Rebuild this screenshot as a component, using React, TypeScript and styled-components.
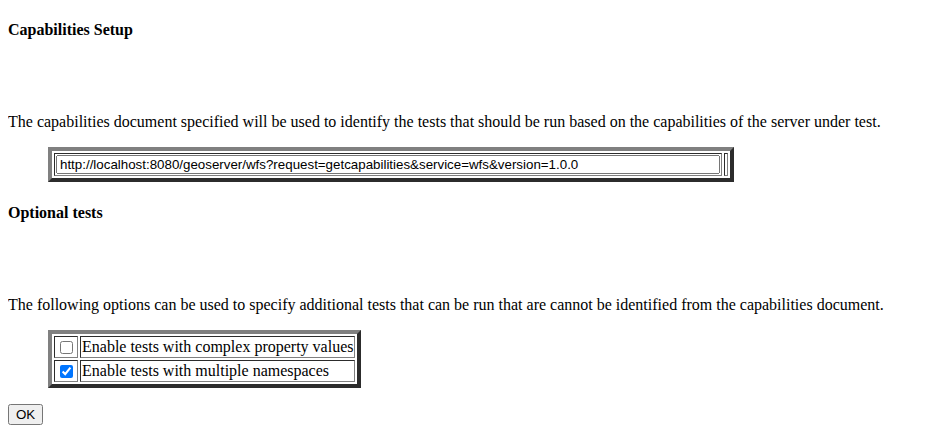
import styled, { createGlobalStyle } from "styled-components";

const Global = createGlobalStyle`
  body {
    margin: 0 8px 8px;
    font-family: "Liberation Serif", "Times New Roman", serif;
    font-size: 16px;
    color: #000;
    background: #fff;
  }
`;

const Heading = styled.h4`
  margin: 21.28px 0 0;
  font-size: 16px;
  font-weight: bold;
`;

const Lead = styled.p`
  margin: 74px 0 16px;
`;

const Indent = styled.blockquote`
  margin: 16px 40px;
`;

const Frame = styled.table`
  border: 4px outset gray;
  border-spacing: 2px;
  border-collapse: separate;
`;

const Cell = styled.td`
  border: 1px inset gray;
  padding: 1px;
  line-height: 18px;
`;

const UrlInput = styled.input`
  width: 664px;
  height: 19px;
  box-sizing: border-box;
  font-family: "Liberation Sans", Arial, sans-serif;
  font-size: 13.33px;
  padding: 0 2px;
  margin: 0;
  vertical-align: top;
`;

const Check = styled.input`
  margin: 3px 3px 2px 4px;
  vertical-align: top;
`;

const OkButton = styled.button`
  font-family: "Liberation Sans", Arial, sans-serif;
  font-size: 13.33px;
  padding: 1px 6px;
  margin: 0;
`;

const options = [
  { label: "Enable tests with complex property values", checked: false },
  { label: "Enable tests with multiple namespaces", checked: true },
];

export default function App() {
  return (
    <>
      <Global />
      <form onSubmit={(e) => e.preventDefault()}>
        <Heading>Capabilities Setup</Heading>
        <Lead>
          The capabilities document specified will be used to identify the tests that should be run
          based on the capabilities of the server under test.
        </Lead>
        <Indent>
          <Frame>
            <tbody>
              <tr>
                <Cell>
                  <UrlInput
                    type="text"
                    defaultValue="http://localhost:8080/geoserver/wfs?request=getcapabilities&service=wfs&version=1.0.0"
                  />
                </Cell>
                <Cell />
              </tr>
            </tbody>
          </Frame>
        </Indent>
        <Heading>Optional tests</Heading>
        <Lead>
          The following options can be used to specify additional tests that can be run that are
          cannot be identified from the capabilities document.
        </Lead>
        <Indent>
          <Frame>
            <tbody>
              {options.map((o) => (
                <tr key={o.label}>
                  <Cell>
                    <Check type="checkbox" defaultChecked={o.checked} />
                  </Cell>
                  <Cell>{o.label}</Cell>
                </tr>
              ))}
            </tbody>
          </Frame>
        </Indent>
        <OkButton type="submit">OK</OkButton>
      </form>
    </>
  );
}
